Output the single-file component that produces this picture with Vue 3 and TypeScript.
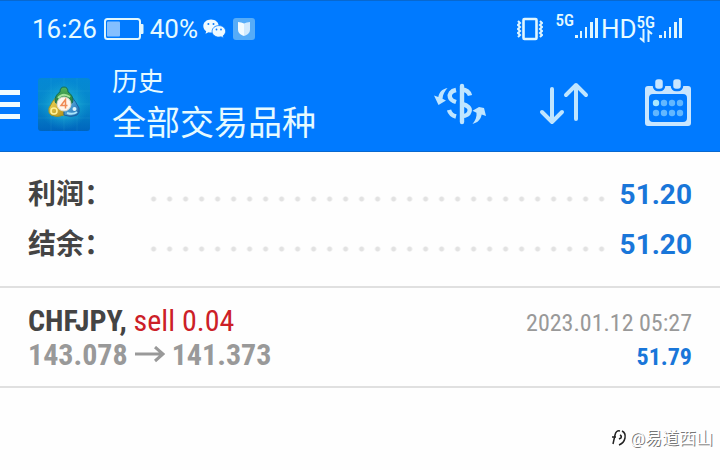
<script setup lang="ts">
interface SummaryRow {
  label: string
  value: string
}

interface Deal {
  symbol: string
  side: string
  volume: string
  open: string
  close: string
  time: string
  profit: string
}

const summary: SummaryRow[] = [
  { label: '利润：', value: '51.20' },
  { label: '结余：', value: '51.20' },
]

const deals: Deal[] = [
  {
    symbol: 'CHFJPY',
    side: 'sell',
    volume: '0.04',
    open: '143.078',
    close: '141.373',
    time: '2023.01.12 05:27',
    profit: '51.79',
  },
]
</script>

<template>
  <div class="screen">
    <header class="top">
      <div class="status">
        <div class="status-group">
          <span>16:26</span>
          <svg class="battery" width="40" height="22" viewBox="0 0 40 22" aria-hidden="true">
            <rect x="1" y="1" width="35" height="20" rx="2.5" fill="none" stroke="#dff6ff" stroke-width="2" />
            <rect x="3" y="3.500" width="13" height="15" rx="1" fill="#84bfff" />
            <path d="M36 6h2.500q1 0 1 1v8q0 1-1 1H36z" fill="#dff6ff" />
          </svg>
          <span>40%</span>
          <svg class="wechat" width="23" height="20" viewBox="0 0 23 20" aria-hidden="true">
            <path d="M8 0.500C3.500 0.500 0.300 3.400 0.300 7c0 2.200 1.100 4 2.900 5.200L2.500 14.800l3-1.600c.9.250 1.700.35 2.500.35C12.500 13.550 15.700 10.600 15.700 7S12.500.5 8 .5z" fill="#effaff" />
            <circle cx="5.400" cy="5" r="1" fill="#087dff" />
            <circle cx="10.500" cy="5" r="1" fill="#087dff" />
            <path d="M15.800 6.600c-3.900 0-6.700 2.600-6.700 5.700s2.800 5.800 6.700 5.800c.8 0 1.600-.1 2.300-.3l2.500 1.400-.6-2.300c1.600-1.100 2.600-2.700 2.600-4.600 0-3.100-2.900-5.700-6.800-5.700z" fill="#effaff" stroke="#087dff" stroke-width=".8" />
            <circle cx="13.500" cy="10.500" r=".9" fill="#087dff" />
            <circle cx="18" cy="10.500" r=".9" fill="#087dff" />
          </svg>
          <svg width="22" height="22" viewBox="0 0 22 22" aria-hidden="true">
            <rect width="22" height="22" rx="3" fill="#56acf8" />
            <path d="M5 4q3.500 0 6 1.500V18q-2-.5-4-2-2-1.500-2-4z" fill="#f3fbff" />
            <path d="M17 4q-3.500 0-6 1.500V18q2-.5 4-2 2-1.500 2-4z" fill="#d2eafe" />
          </svg>
        </div>

        <div class="status-group">
          <svg width="26" height="24" viewBox="0 0 26 24" fill="none" stroke="#dff6ff" aria-hidden="true">
            <rect x="6.500" y="2" width="13" height="20" rx="1" stroke-width="2.600" />
            <path d="M1 4l2 2-2 2 2 2-2 2 2 2-2 2 2 2-2 2" stroke-width="2" />
            <path d="M23 4l2 2-2 2 2 2-2 2 2 2-2 2 2 2-2 2" stroke-width="2" />
          </svg>
          <span class="network first">5G</span>
          <svg width="23" height="22" viewBox="0 0 23 22" fill="#dff6ff" aria-hidden="true">
            <rect x="0" y="17" width="3" height="3" /><rect x="5" y="13" width="2" height="7" />
            <rect x="10" y="9" width="2" height="11" /><rect x="15" y="4" width="3" height="16" />
            <rect x="20" y="0" width="3" height="20" />
          </svg>
          <span class="hd">HD</span>
          <span class="network-stack">
            <span class="network">5G</span>
            <svg width="14" height="14" viewBox="0 0 14 14" fill="none" stroke="#dff6ff" stroke-width="2" aria-hidden="true">
              <path d="M4.500 0v12L1 9M9.500 13V2L13 5" />
            </svg>
          </span>
          <svg class="second" width="23" height="22" viewBox="0 0 23 22" fill="#dff6ff" aria-hidden="true">
            <rect x="0" y="17" width="3" height="3" /><rect x="5" y="13" width="2" height="7" />
            <rect x="10" y="9" width="2" height="11" /><rect x="15" y="4" width="3" height="16" />
            <rect x="20" y="0" width="3" height="20" />
          </svg>
        </div>
      </div>

      <div class="toolbar">
        <button type="button" aria-label="菜单">
          <svg width="20" height="30" viewBox="0 0 20 30" fill="#effcff" aria-hidden="true">
            <rect y="1" width="20" height="5" /><rect y="13" width="20" height="5" /><rect y="25" width="20" height="5" />
          </svg>
        </button>
        <svg class="logo" width="52" height="53" viewBox="0 0 52 53" aria-hidden="true">
          <defs>
            <linearGradient id="tile" x1="0" y1="0" x2="0" y2="1">
              <stop offset="0" stop-color="#0588d4" /><stop offset=".5" stop-color="#0789cb" /><stop offset="1" stop-color="#0065bd" />
            </linearGradient>
            <radialGradient id="glow"><stop offset="0" stop-color="#31d6df" /><stop offset="1" stop-color="#129ed0" stop-opacity="0" /></radialGradient>
            <linearGradient id="green" x1="0" y1="0" x2="0" y2="1"><stop stop-color="#54b65b" /><stop offset="1" stop-color="#196e39" /></linearGradient>
            <linearGradient id="gold" x1="0" y1="0" x2="1" y2="1"><stop stop-color="#f5df5e" /><stop offset="1" stop-color="#b58d19" /></linearGradient>
            <linearGradient id="blue" x1="0" y1="0" x2="1" y2="1"><stop stop-color="#77c6ed" /><stop offset="1" stop-color="#1767ae" /></linearGradient>
          </defs>
          <rect width="52" height="53" rx="3" fill="url(#tile)" />
          <circle cx="26" cy="27" r="25" fill="url(#glow)" />
          <path d="M0 13h52M0 26h52M0 40h52M13 0v53M26 0v53M39 0v53" stroke="#55d5e5" stroke-width=".5" opacity=".2" />
          <path d="M18 19q-4 5-7 11-1 5 2 7 6 3 13 0v-12z" fill="url(#gold)" stroke="#97932b" />
          <path d="M34 19q4 5 7 11 1 5-2 7-6 3-13 0v-12z" fill="url(#blue)" stroke="#1961a4" />
          <path d="M22 14q0-5 4-5t4 5q5 3 5 9-1 5-9 5t-9-5q0-6 5-9z" fill="url(#green)" stroke="#126c58" />
          <path d="M20 20q5-6 12-1" fill="none" stroke="#a4e299" stroke-width="2" />
          <circle cx="16" cy="33" r="3" fill="none" stroke="#fff298" stroke-width="1.500" />
          <circle cx="36.500" cy="31" r="2" fill="#ddf6ff" />
          <path d="M29 35q6 2 10-1" fill="none" stroke="#a8e4fb" stroke-width="2" />
          <circle cx="26" cy="26" r="7" fill="#fff6ec" stroke="#d9dacc" />
          <path d="M27.500 30.500v-9l-4.500 6h6.500" fill="none" stroke="#ef8b55" stroke-width="1.500" />
        </svg>
        <div class="titles">
          <div class="subtitle">历史</div>
          <h1>全部交易品种</h1>
        </div>
        <nav class="actions">
          <button type="button" aria-label="货币">
            <svg width="52" height="52" viewBox="0 0 52 52" aria-hidden="true">
              <g fill="none" stroke="#bfe5ff" stroke-width="4.400">
                <path d="M28 8v36" stroke-linecap="round" />
                <path d="M22 12c-5 1-7 4-6 7.500 .7 2.300 2.700 3.500 6 4.500" />
                <path d="M28 11.500c4.500.4 7 2.500 8 6" />
                <path d="M28 26c6 1.500 8.500 4 7.500 7.500-1 3.500-3.500 4.500-7.500 4.500" />
                <path d="M15 32c1 3.500 3 5.500 7 6.500" />
              </g>
              <path d="M13.500 10C8 11 5.300 14 4.300 19L0 17.500l4.500 9.500L12 22.500l-3.500-1.800C9 16 10.500 13.500 13.500 10z" fill="#bfe5ff" />
              <path d="M38.500 46c5.500-1.500 8.200-4.500 9.200-9.500L52 38l-2-8-5-1-6.500 3.800 4 2C43 38.500 41.500 42.500 38.500 46z" fill="#bfe5ff" />
            </svg>
          </button>
          <button type="button" aria-label="排序">
            <svg width="52" height="52" viewBox="0 0 52 52" fill="none" stroke="#bfe5ff" stroke-width="4" stroke-linecap="round" stroke-linejoin="round" aria-hidden="true">
              <path d="M14 11v33M4 34l10 10 10-10M38 41V7M28 17L38 7l10 10" />
            </svg>
          </button>
          <button type="button" aria-label="日历">
            <svg width="52" height="52" viewBox="0 0 52 52" aria-hidden="true">
              <path fill-rule="evenodd" d="M6 8H46q3 0 3 3V45q0 3-3 3H6q-3 0-3-3V11q0-3 3-3zM11 16q-4 0-4 4v20q0 4 4 4h30q4 0 4-4V20q0-4-4-4z" fill="#c9e6ff" />
              <g fill="#c9e6ff" stroke="#007aff" stroke-width="2.500">
                <rect x="12" y="0" width="10" height="12" rx="4" /><rect x="30" y="0" width="10" height="12" rx="4" />
              </g>
              <circle cx="14" cy="25" r="3.200" fill="#a9e7ff" />
              <g fill="#62b7ff">
                <circle cx="22" cy="25" r="3.200" /><circle cx="30" cy="25" r="3.200" /><circle cx="38" cy="25" r="3.200" />
                <circle cx="14" cy="35" r="3.200" /><circle cx="22" cy="35" r="3.200" /><circle cx="30" cy="35" r="3.200" /><circle cx="38" cy="35" r="3.200" />
              </g>
            </svg>
          </button>
        </nav>
      </div>
    </header>

    <main>
      <section class="summary">
        <div v-for="row in summary" :key="row.label" class="summary-row">
          <span class="label">{{ row.label }}</span>
          <span class="dots"></span>
          <span class="value">{{ row.value }}</span>
        </div>
      </section>

      <article v-for="deal in deals" :key="deal.time" class="deal">
        <div class="deal-line">
          <div class="deal-name"><b>{{ deal.symbol }},</b> <span class="sell">{{ deal.side }} {{ deal.volume }}</span></div>
          <time>{{ deal.time }}</time>
        </div>
        <div class="deal-line">
          <div class="prices">
            <span>{{ deal.open }}</span>
            <svg width="30" height="18" viewBox="0 0 30 18" fill="none" stroke="#999" stroke-width="3" aria-hidden="true">
              <path d="M0 8h28M20 1l8 7-8 7" />
            </svg>
            <span>{{ deal.close }}</span>
          </div>
          <span class="profit">{{ deal.profit }}</span>
        </div>
      </article>
    </main>

    <footer class="credit">
      <svg width="16" height="18" viewBox="0 0 16 18" fill="none" stroke="#222" stroke-width="1.500" aria-hidden="true">
        <path d="M9 2Q5 1 4 6L2 15M1 8h4M11 2q4 2 3 7-1 5-6 7M9 6q2 1 1 3l-2 1" />
      </svg>
      <span>@易道西山</span>
    </footer>
  </div>
</template>

<style>
body {
  margin: 0;
  background: #fff;
}
</style>

<style scoped>
.screen {
  display: flex;
  flex-direction: column;
  min-height: 100vh;
  background: #fefefe;
  font-family: Roboto, "Noto Sans CJK SC", sans-serif;
}

.top {
  background: #007aff;
  border-bottom: 1px solid #0868cf;
  border-top: 1px solid #0868cf;
  color: #e6faff;
}

.status {
  display: flex;
  justify-content: space-between;
  align-items: center;
  height: 56px;
  padding: 0 38px 0 32px;
  font-size: 26px;
  line-height: 32px;
}

.status-group {
  display: flex;
  align-items: center;
}

.battery {
  margin: 0 6px 0 7px;
}

.wechat {
  margin: 0 7px 0 5px;
}

.network {
  font-family: "Roboto Condensed", Roboto, sans-serif;
  font-size: 17px;
  line-height: 14px;
  font-weight: 500;
}

.first {
  align-self: flex-start;
  margin: 0 1px 0 12px;
}

.hd {
  margin-left: 3px;
}

.network-stack {
  display: flex;
  flex-direction: column;
  align-items: center;
}

.second {
  margin-left: 4px;
}

.toolbar {
  display: flex;
  align-items: center;
  height: 94px;
  padding-right: 26px;
}

button {
  display: flex;
  padding: 0;
  border: 0;
  background: none;
  cursor: pointer;
}

.logo {
  margin: 0 22px 0 18px;
}

.titles {
  flex: 1;
  padding-bottom: 2px;
}

.subtitle {
  font-size: 26px;
  line-height: 40px;
}

h1 {
  margin: 0;
  font-size: 34px;
  line-height: 42px;
  font-weight: 400;
}

.actions {
  display: flex;
  gap: 52px;
}

.summary {
  padding: 16px 28px 18px;
  border-bottom: 2px solid #e0e0e0;
}

.summary-row {
  display: flex;
  align-items: center;
  height: 50px;
  font-size: 28px;
  line-height: 40px;
}

.label {
  width: 118px;
  padding-top: 4px;
  color: #444;
  font-weight: 600;
}

.dots {
  flex: 1;
  height: 16px;
  margin: 12px 10px 0 0;
  background: radial-gradient(circle, #e2e2e2 2px, transparent 3px) right center / 16px 16px repeat-x;
}

.value,
.profit {
  color: #1976d9;
  font-weight: 700;
}

.value {
  padding-top: 4px;
}

.deal {
  padding: 16px 28px 14px;
  border-bottom: 2px solid #e0e0e0;
  font-family: "Roboto Condensed", "Liberation Sans Narrow", Roboto, sans-serif;
}

.deal-line {
  display: flex;
  justify-content: space-between;
  align-items: center;
  height: 34px;
  line-height: 34px;
  font-size: 24px;
}

.deal-name,
.prices {
  font-size: 30px;
  color: #444;
}

.sell {
  color: #cc2027;
}

.prices {
  display: flex;
  align-items: center;
  gap: 7px;
  color: #999;
  font-weight: 700;
}

time,
.profit {
  padding-top: 4px;
}

time {
  color: #999;
}

.credit {
  display: flex;
  align-items: center;
  justify-content: flex-end;
  gap: 3px;
  margin-top: auto;
  padding: 0 7px 20px 0;
  font-size: 17px;
  line-height: 24px;
  color: #fff;
  text-shadow: 1px 1px 0 #777;
}
</style>
